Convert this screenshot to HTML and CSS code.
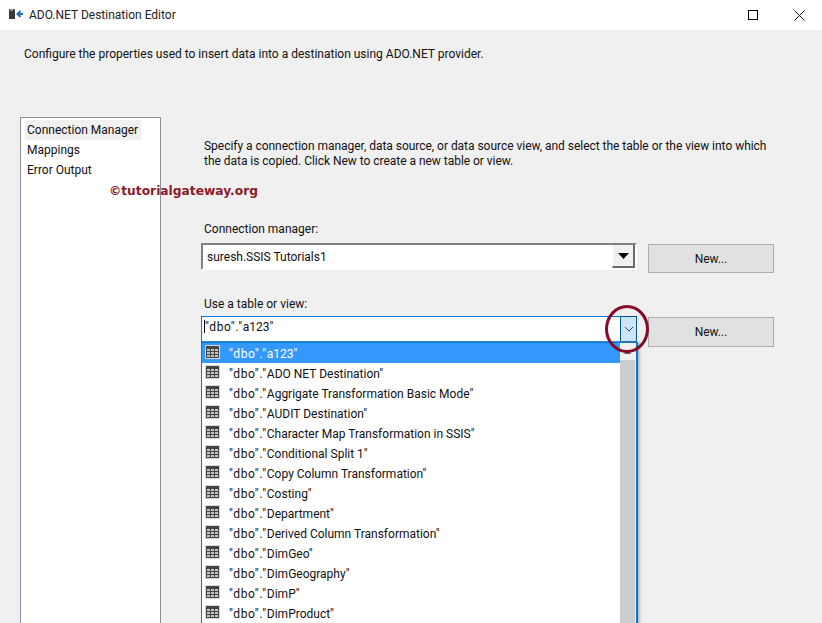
FILE: index.html
```html
<!DOCTYPE html>
<html lang="en">
<head>
<meta charset="utf-8">
<title>ADO.NET Destination Editor</title>
<link rel="stylesheet" href="styles.css">
</head>
<body>
<div class="window">
  <header class="titlebar">
    <svg class="app-icon" width="15" height="14" viewBox="0 0 15 14">
      <path d="M0 1h5l1 1v9H0z" fill="#3a3a3a"/>
      <path d="M1 1h3v2H1z" fill="#9a9a9a"/>
      <path d="M14 6H8.500M11.500 3l-3 3 3 3" fill="none" stroke="#1f6fc0" stroke-width="2"/>
    </svg>
    <span class="title">ADO.NET Destination Editor</span>
    <div class="win-controls">
      <span class="win-btn"><svg width="11" height="11" viewBox="0 0 11 11"><rect x="0.5" y="0.5" width="9" height="9" fill="none" stroke="#000"/></svg></span>
      <span class="win-btn"><svg width="11" height="11" viewBox="0 0 11 11"><path d="M0.5 0.5l10 10M10.5 0.5l-10 10" stroke="#111" fill="none"/></svg></span>
    </div>
  </header>
  <p class="intro">Configure the properties used to insert data into a destination using ADO.NET provider.</p>
  <div class="content">
    <nav class="sidebar">
      <div class="nav-item nav-active">Connection Manager</div>
      <div class="nav-item">Mappings</div>
      <div class="nav-item">Error Output</div>
    </nav>
    <main class="panel">
      <p class="help">Specify a connection manager, data source, or data source view, and select the table or the view into which<br>the data is copied. Click New to create a new table or view.</p>
      <label class="field-label lbl-conn">Connection manager:</label>
      <div class="field-row">
        <div class="combo combo-classic">
          <span class="combo-text">suresh.SSIS Tutorials1</span>
          <span class="classic-arrow"><svg width="11" height="6" viewBox="0 0 11 6"><path d="M0 0h11L5.500 6z" fill="#000"/></svg></span>
        </div>
        <button class="btn">New...</button>
      </div>
      <label class="field-label lbl-table">Use a table or view:</label>
      <div class="field-row row-table">
        <div class="combo combo-modern">
          <span class="combo-text"><i class="caret"></i><span class="schema">"dbo"."</span>a123"</span>
          <span class="modern-arrow"><svg width="10" height="6" viewBox="0 0 10 6"><path d="M1 1l4 4 4-4" fill="none" stroke="#444"/></svg></span>
        </div>
        <button class="btn btn-tall">New...</button>
      </div>
    </main>
  </div>
  <div class="watermark">©tutorialgateway.org</div>
  <div class="dropdown">
    <ul class="list" id="list"></ul>
    <div class="scrollbar">
      <div class="scroll-up"><svg width="7" height="4" viewBox="0 0 7 4"><path d="M0 4l3.500-4L7 4z" fill="#606060"/></svg></div>
    </div>
  </div>
  <div class="circle"></div>
</div>
<script>
var names = ['a123','ADO NET Destination','Aggrigate Transformation Basic Mode','AUDIT Destination','Character Map Transformation in SSIS','Conditional Split 1','Copy Column Transformation','Costing','Department','Derived Column Transformation','DimGeo','DimGeography','DimP','DimProduct'];
var icon = '<svg class="tbl" width="15" height="14" viewBox="0 0 15 14"><rect width="15" height="14" fill="#d9d9d9"/><rect x="1" y="1" width="13" height="12" fill="#444"/><path d="M2 4h3v2H2zM6 4h3v2H6zM10 4h3v2h-3zM2 7h3v2H2zM6 7h3v2H6zM10 7h3v2h-3zM2 10h3v2H2zM6 10h3v2H6zM10 10h3v2h-3z" fill="#c4c4c4"/></svg>';
document.getElementById('list').innerHTML = names.map(function (n, i) {
  return '<li class="row' + (i === 0 ? ' row-sel' : '') + '">' + icon + '<span class="row-text"><span class="schema">"dbo"."</span>' + n + '"</span></li>';
}).join('');
</script>
</body>
</html>
```
FILE: styles.css
```css
* { box-sizing: border-box; }
html, body { margin: 0; height: 100%; overflow: hidden; }
body { font-family: Roboto, "Noto Sans", sans-serif; font-size: 12px; color: #111; background: #f0f0f0; }
.window { position: relative; width: 822px; height: 623px; overflow: hidden; display: flex; flex-direction: column; }

.titlebar { height: 30px; flex: none; background: #fff; display: flex; align-items: center; padding-left: 9px; }
.app-icon { flex: none; }
.title { margin-left: 5px; font-size: 12px; color: #222; }
.win-controls { margin-left: auto; display: flex; }
.win-btn { width: 46px; height: 30px; display: flex; align-items: center; justify-content: center; }

.intro { margin: 0; padding: 15px 0 0 24px; height: 87px; flex: none; line-height: 18px; }

.content { flex: 1; display: flex; padding-left: 20px; min-height: 0; }
.sidebar { width: 141px; flex: none; height: 520px; background: #fff; border: 1px solid #8c8c9c; padding: 2px 4px; }
.nav-item { height: 20px; line-height: 20px; padding-left: 2px; width: 116px; white-space: nowrap; }
.nav-active { background: #f0f0f0; }

.panel { margin-left: 40px; flex: 1; min-width: 0; }
.help { margin: 22px 0 0 3px; line-height: 15px; letter-spacing: -0.03px; }
.field-label { display: block; margin-left: 3px; line-height: 16px; }
.lbl-conn { margin-top: 52px; }
.lbl-table { margin-top: 23px; }

.field-row { display: flex; align-items: flex-start; margin-top: 6px; }
.row-table { margin-top: 4px; }
.combo { width: 436px; flex: none; display: flex; align-items: stretch; background: #fff; }
.combo-text { flex: 1; padding-left: 4px; }
.schema { letter-spacing: 0.7px; }
.combo-classic { height: 27px; line-height: 25px; border: 2px solid #fff; border-top-color: #808080; border-left-color: #808080; }
.classic-arrow { width: 23px; background: #f0f0f0; border-right: 2px solid #696969; border-bottom: 2px solid #696969; border-left: 1px solid #fff; display: flex; align-items: center; justify-content: center; }
.combo-modern { height: 26px; line-height: 20px; border: 1px solid #0078d7; }
.combo-modern .combo-text { padding-left: 2px; }
.caret { display: inline-block; width: 1px; height: 13px; background: #000; vertical-align: -2px; }
.modern-arrow { width: 17px; margin: -1px -1px -1px 0; background: #cce4f7; border: 1px solid #005499; display: flex; align-items: center; justify-content: center; }

.btn { margin-left: 11px; width: 126px; height: 29px; padding: 0; background: #e1e1e1; border: 1px solid #adadad; font: inherit; color: #111; margin-top: 1px; }
.btn-tall { height: 30px; }

.watermark { position: absolute; left: 109px; top: 182px; font-family: "DejaVu Sans", sans-serif; font-weight: bold; font-size: 12.25px; line-height: 18px; color: #8b1a2b; }

.dropdown { position: absolute; left: 201px; top: 342px; width: 437px; height: 300px; background: #fff; border: 1px solid #0078d7; border-width: 1px 2px 0 1px; display: flex; box-shadow: 2px 0 2px #bbb; }
.list { list-style: none; margin: 0; padding: 0; flex: 1; min-width: 0; }
.row { height: 20px; display: flex; align-items: flex-start; padding: 2px 0 0 3px; line-height: 18px; }
.row-text { margin-left: 9px; }
.row-sel { background: #3399ff; color: #fff; }
.scrollbar { width: 16px; flex: none; background: #cdcdcd; border-right: 1px solid #f0f0f0; }
.scroll-up { height: 17px; background: #f0f0f0; display: flex; align-items: center; justify-content: center; }
.tbl { flex: none; }

.circle { position: absolute; left: 605px; top: 305px; width: 44px; height: 48px; border: 3px solid #840a26; border-radius: 50%; }
```
